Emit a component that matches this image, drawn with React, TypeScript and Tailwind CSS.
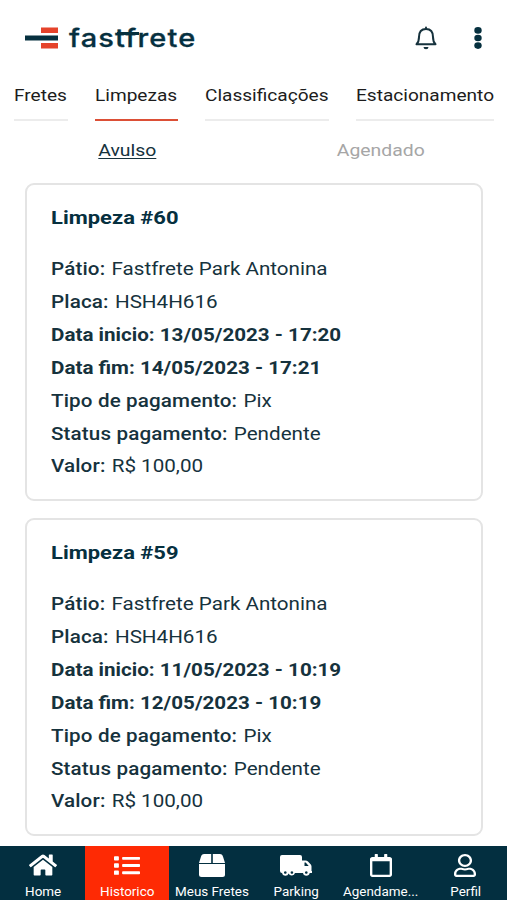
import type { ReactNode } from 'react'
import { FaHome, FaList, FaRegCalendar, FaRegUser } from 'react-icons/fa'

type Cleaning = { id: number, start: string, end: string }

const cleanings: Cleaning[] = [
    { id: 60, start: '13/05/2023 - 17:20', end: '14/05/2023 - 17:21' },
    { id: 59, start: '11/05/2023 - 10:19', end: '12/05/2023 - 10:19' },
]

const tabs = [
    { label: 'Fretes', width: 'w-[54px]' },
    { label: 'Limpezas', width: 'w-[83px]', active: true },
    { label: 'Classificações', width: 'w-[124px]' },
    { label: 'Estacionamento', width: 'w-[138px]' },
]

const BoxIcon = ({ className }: { className?: string }) => (
    <svg viewBox="0 0 26 23" preserveAspectRatio="none" fill="currentColor" className={className}>
        <path d="M5 0h7.200v9H0L2.300 1.800Q3 0 5 0z" />
        <path d="M13.800 0H21q2 0 2.700 1.800L26 9H13.800z" />
        <path d="M0 10h26V20.500q0 2.500-2.500 2.500h-21Q0 23 0 20.500z" />
    </svg>
)

const TruckIcon = ({ className }: { className?: string }) => (
    <svg viewBox="0 0 32 21" preserveAspectRatio="none" fill="currentColor" fillRule="evenodd" className={className}>
        <path d="M2 0h18q2 0 2 2v3.500h3.500q1.500 0 2.500 1l2.800 3q.7.8.7 2v4.500h.5v2h-2.300a3.400 3.200 0 0 1-6.700 0H15a3.400 3.200 0 0 1-6.400 0.500a3.400 3.200 0 0 1-6.600-.5Q0 18 0 16V2q0-2 2-2z M24.500 7.500v3.500h4.200l-3-3.500z M5.300 16.200a1.300 1.300 0 1 0 .01 0z M11.900 16.200a1.300 1.300 0 1 0 .01 0z M26.300 16.200a1.300 1.300 0 1 0 .01 0z" />
    </svg>
)

const nav = [
    { label: 'Home', icon: FaHome, size: 'w-[28px] h-[24px]' },
    { label: 'Historico', icon: FaList, size: 'w-[26px] h-[23px]', active: true },
    { label: 'Meus Fretes', icon: BoxIcon, size: 'w-[26px] h-[23px]' },
    { label: 'Parking', icon: TruckIcon, size: 'w-[32px] h-[21px]' },
    { label: 'Agendame...', icon: FaRegCalendar, size: 'w-[22px] h-[23px]' },
    { label: 'Perfil', icon: FaRegUser, size: 'w-[22px] h-[23px]' },
]

const Logo = () => (
    <div className="flex items-center">
        <svg viewBox="0 0 33 22" className="w-[33px] h-[22px]">
            <path fill="#e5432b" d="M16 0.5h17v5.5H16zM16 16h17v5.5H16z" />
            <path fill="#06303f" d="M0 8.5h33v5H0z" />
        </svg>
        <div className="relative ml-[11px] w-[127px] h-[34px]">
            <span className="inline-block origin-left scale-x-[1.16] font-['Inter',sans-serif] text-[25px] leading-[34px] tracking-[1px] font-medium text-[#06303f] [font-feature-settings:'calt'_0] [-webkit-text-stroke:0.3px_#06303f]">fastfrete</span>
            <span className="absolute left-[48px] top-[11px] w-[22px] h-[3px] bg-[#06303f]" />
        </div>
    </div>
)

const Field = ({ label, bold, children }: { label: string, bold?: boolean, children: ReactNode }) => (
    <p className={bold ? 'font-bold' : ''}>
        <span className={bold ? '' : 'mr-[1px] font-medium tracking-[0.12px]'}>{label}:</span> {children}
    </p>
)

const Card = ({ id, start, end }: Cleaning) => (
    <div className="h-[318px] shrink-0 rounded-[9px] border-2 border-[#e4e4e4] bg-white pl-[24px] pt-[19px] text-[#16323d]">
        <div className="w-[350px] origin-left scale-x-[1.145] text-[18px] leading-[32.9px]">
            <h2 className="mb-[21px] text-[19.2px] leading-[28px] font-bold text-[#06303f]">Limpeza #{id}</h2>
            <Field label="Pátio">Fastfrete Park Antonina</Field>
            <Field label="Placa">HSH4H616</Field>
            <Field label="Data inicio" bold>{start}</Field>
            <Field label="Data fim" bold>{end}</Field>
            <Field label="Tipo de pagamento">Pix</Field>
            <Field label="Status pagamento">Pendente</Field>
            <Field label="Valor">R$ 100,00</Field>
        </div>
    </div>
)

const App = () => {
    return <div className="flex h-[900px] w-[507px] flex-col overflow-hidden bg-white font-['Roboto',sans-serif]">
        <header className="flex h-[76px] shrink-0 items-center pl-[25px] pr-[24px]">
            <Logo />
            <svg viewBox="0 0 24 24" preserveAspectRatio="none" className="ml-auto h-[24px] w-[24px]" fill="none" stroke="#16323d" strokeWidth="2" strokeLinejoin="round" strokeLinecap="round">
                <path d="M2.500 18.300h19c-2-2-2.500-3.500-2.500-7.300 0-5-2.500-8-7-8s-7 3-7 8c0 4-.5 5.300-2.500 7.300z" />
                <path d="M12 1.500v1.500" />
                <path d="M9.500 21h5a2.500 2.200 0 0 1-5 0z" fill="#16323d" stroke="none" />
            </svg>
            <svg viewBox="0 0 8 22" className="ml-[36px] mr-[1px] h-[22px] w-[8px]" fill="#06303f">
                <ellipse cx="4" cy="3.400" rx="3.700" ry="3.300" />
                <ellipse cx="4" cy="11" rx="3.700" ry="3.300" />
                <ellipse cx="4" cy="18.600" rx="3.700" ry="3.300" />
            </svg>
        </header>

        <nav className="flex shrink-0 gap-[27px] pl-[14px]">
            {tabs.map(t => (
                <div key={t.label} className={`${t.width} h-[45px] shrink-0 border-b-2 pt-[7px] ${t.active ? 'border-[#dc4f36]' : 'border-[#ececec]'}`}>
                    <span className="inline-block origin-left scale-x-[1.122] text-[17px] leading-[24px] whitespace-nowrap text-[#1c1c1c]">{t.label}</span>
                </div>
            ))}
        </nav>

        <div className="grid h-[61px] shrink-0 grid-cols-2 pt-[16px] text-center text-[17px] leading-[26px]">
            <span className="pl-[1px] scale-x-[1.14] text-[#16323d] underline underline-offset-2">Avulso</span>
            <span className="scale-x-[1.14] text-[#a6a6a6]">Agendado</span>
        </div>

        <main className="flex flex-1 flex-col gap-[17px] overflow-hidden pt-[1px] pl-[25px] pr-[24px]">
            {cleanings.map(c => <Card key={c.id} {...c} />)}
        </main>

        <footer className="grid h-[54px] shrink-0 grid-cols-6 bg-[#032f40] text-white">
            {nav.map(({ label, icon: Icon, size, active }) => (
                <div key={label} className={`flex flex-col items-center pt-[7px] pl-[1px] ${active ? 'bg-[#fe2a04]' : ''}`}>
                    <div className="flex h-[24px] items-center">
                        <Icon preserveAspectRatio="none" className={size} />
                    </div>
                    <span className="mt-[6px] scale-x-[1.12] text-[12px] leading-[18px] whitespace-nowrap">{label}</span>
                </div>
            ))}
        </footer>
    </div>
}
export default App
